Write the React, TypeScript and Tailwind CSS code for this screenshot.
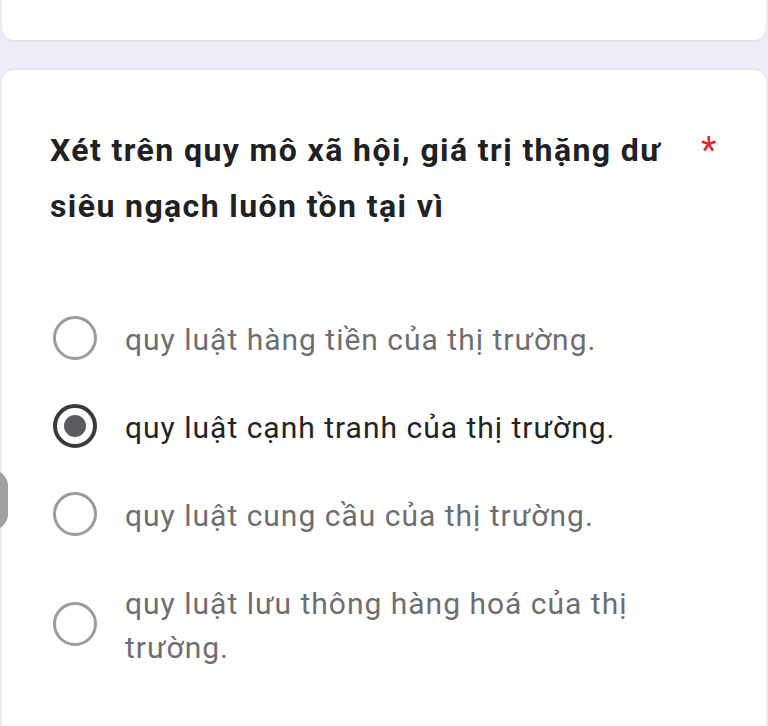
import React from "react";

const options = [
  { label: "quy luật hàng tiền của thị trường.", selected: false },
  { label: "quy luật cạnh tranh của thị trường.", selected: true },
  { label: "quy luật cung cầu của thị trường.", selected: false },
  { label: "quy luật lưu thông hàng hoá của thị trường.", selected: false },
];

function Radio({ selected }: { selected: boolean }) {
  if (selected) {
    return (
      <div className="w-[44px] h-[44px] shrink-0 rounded-full border-[4px] border-[#3a3a3c] flex items-center justify-center">
        <div className="w-[22px] h-[22px] rounded-full bg-[#5a5b5f]" />
      </div>
    );
  }
  return <div className="w-[44px] h-[44px] shrink-0 rounded-full border-[3px] border-[#9b9b9b]" />;
}

export default function App() {
  return (
    <div
      className="relative w-[768px] h-[726px] overflow-hidden bg-[#efecf8] flex flex-col px-[2px]"
      style={{ fontFamily: "Roboto, 'Noto Sans', Arial, sans-serif" }}
    >
      <div className="h-[40px] shrink-0 bg-white rounded-b-[12px] shadow-[0_1px_2px_rgba(0,0,0,0.08)]" />
      <div className="mt-[30px] flex-1 bg-white rounded-t-[12px] shadow-[0_-1px_2px_rgba(0,0,0,0.06)] pt-[52px] pl-[48px] pr-[20px]">
        <div className="flex items-start text-[32px] leading-[56px] font-bold text-[#202124] tracking-[1.4px]">
          <div className="w-[645px]">Xét trên quy mô xã hội, giá trị thặng dư siêu ngạch luôn tồn tại vì</div>
          <div className="ml-[6px] text-[#d93025] font-normal text-[36px] leading-[56px] tracking-normal">*</div>
        </div>
        <div className="mt-[84px] flex flex-col gap-[44px] pl-[3px]">
          {options.map((o) => (
            <div key={o.label} className="flex items-center gap-[28px]">
              <div className="-mt-[4px]">
                <Radio selected={o.selected} />
              </div>
              <div
                className={
                  "text-[30px] leading-[44px] tracking-[1px] w-[540px] " +
                  (o.selected ? "text-[#222326]" : "text-[#6e6e70]")
                }
              >
                {o.label}
              </div>
            </div>
          ))}
        </div>
      </div>
      <div className="absolute left-[-24px] top-[470px] w-[32px] h-[60px] rounded-full bg-[#a0a0a0]" />
    </div>
  );
}
